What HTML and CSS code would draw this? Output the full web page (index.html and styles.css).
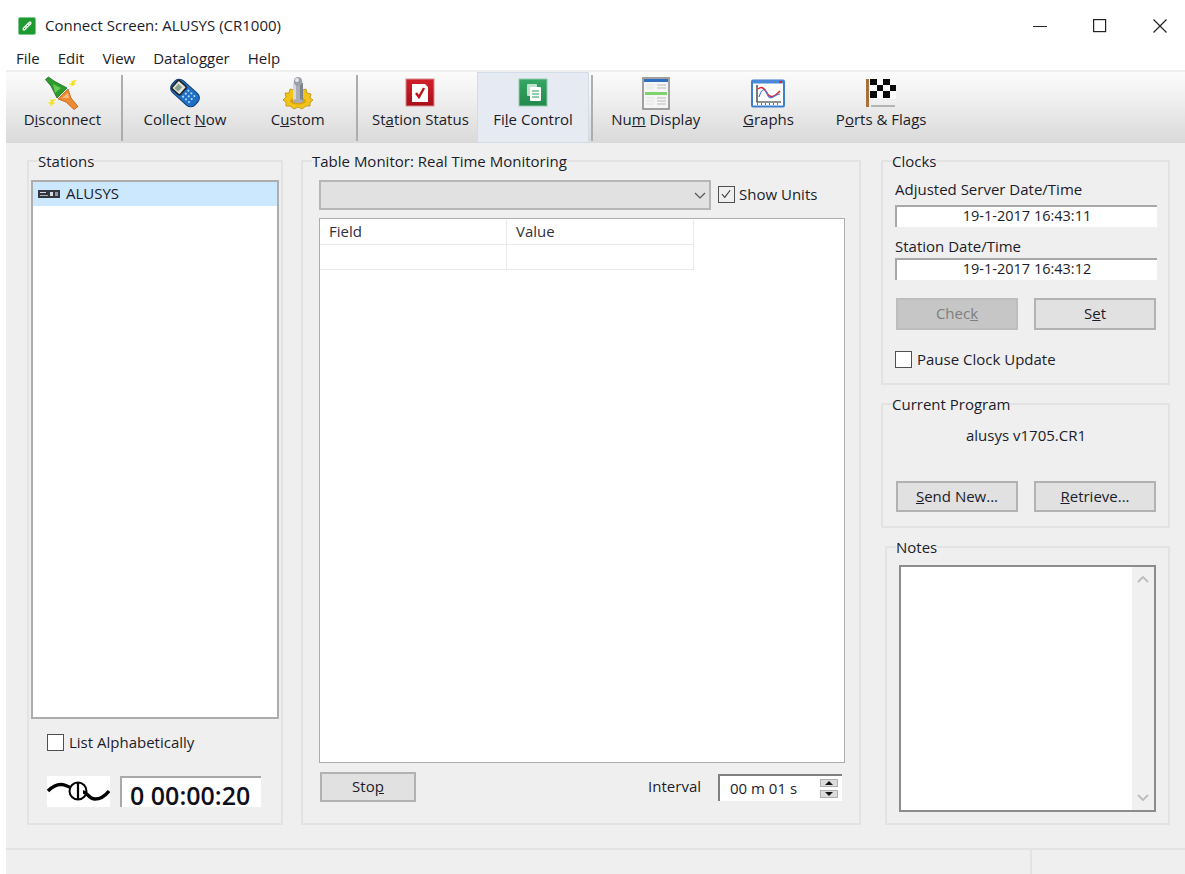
FILE: index.html
```html
<!DOCTYPE html>
<html lang="en">
<head>
<meta charset="utf-8">
<title>Connect Screen: ALUSYS (CR1000)</title>
<link rel="stylesheet" href="styles.css">
</head>
<body>
<div class="window">
  <header class="titlebar">
    <svg class="app-icon" viewBox="0 0 18 18">
      <rect x="0.5" y="0.5" width="17" height="17" rx="1.5" fill="#1f9a32" stroke="#7cc98a"/>
      <path d="M6 12 L12 6" stroke="#e8f5e8" stroke-width="3.2" stroke-linecap="round"/>
      <path d="M6 12 L12 6" stroke="#1f9a32" stroke-width="1" stroke-dasharray="2 2"/>
    </svg>
    <span class="title-text">Connect Screen: ALUSYS (CR1000)</span>
    <div class="win-controls">
      <svg class="win-btn" viewBox="0 0 14 14"><path d="M0 7.5H14" stroke="#222" fill="none"/></svg>
      <svg class="win-btn" viewBox="0 0 14 14"><rect x="0.6" y="0.6" width="12" height="12" stroke="#222" stroke-width="1.2" fill="none"/></svg>
      <svg class="win-btn" viewBox="0 0 14 14"><path d="M0.5 0.5L13.5 13.5M13.5 0.5L0.5 13.5" stroke="#222" stroke-width="1.2" fill="none"/></svg>
    </div>
  </header>
  <nav class="menubar">
    <span>File</span><span>Edit</span><span>View</span><span>Datalogger</span><span>Help</span>
  </nav>
  <div class="client">
    <div class="toolbar">
      <div class="tool">
        <svg class="tool-icon" viewBox="0 0 34 34">
          <path d="M0.5 3.5 L3.5 1 L9 5 L22 12 L12 22 L6 10 Z" fill="#2c9a2c" stroke="#1c6d1c" stroke-width="0.8"/>
          <path d="M8 8 L16 12 L10 17 Z" fill="#66c954"/>
          <path d="M23 13 L13 23 L21 26 L29 33.5 L33 30.5 L26 22 Z" fill="#ee8a30" stroke="#b8601c" stroke-width="0.8"/>
          <path d="M17 22 L23 17 L24 22 Z" fill="#f9bd7a"/>
          <path d="M23 8 L27 7 L26 5 L32 4 L29 7 L31 8 L25 11 L27 9 Z" fill="#f2e21e"/>
          <path d="M2 27 L6 26 L5 24 L11 23 L8 26 L10 27 L4 31 L6 28 Z" fill="#f2e21e"/>
        </svg>
        <span>D<u>i</u>sconnect</span>
      </div>
      <div class="tool-sep"></div>
      <div class="tool">
        <svg class="tool-icon" viewBox="0 0 34 34">
          <g transform="rotate(-48 17 17)">
            <rect x="9" y="1.5" width="16" height="31" rx="6" fill="#1f6fc4" stroke="#123f78" stroke-width="1"/>
            <rect x="11.5" y="3.5" width="11" height="11" rx="1.5" fill="#dfe5df" stroke="#222" stroke-width="1.6"/>
            <rect x="13.5" y="6" width="6" height="5" fill="#8aa08a"/>
            <g fill="#a9d4f5">
              <circle cx="13" cy="18" r="1.1"/><circle cx="17" cy="18" r="1.1"/><circle cx="21" cy="18" r="1.1"/>
              <circle cx="13" cy="22" r="1.1"/><circle cx="17" cy="22" r="1.1"/><circle cx="21" cy="22" r="1.1"/>
              <circle cx="13" cy="26" r="1.1"/><circle cx="17" cy="26" r="1.1"/><circle cx="21" cy="26" r="1.1"/>
            </g>
          </g>
        </svg>
        <span>Collect <u>N</u>ow</span>
      </div>
      <div class="tool">
        <svg class="tool-icon" viewBox="0 0 34 34">
          <path d="M14 11 L20 11 L21 14 L25 13 L26 17 L30 18 L29 22 L32 24 L29 27 L29 30 L25 30 L21 33 L17 31 L13 33 L9 30 L5 30 L5 26 L2 24 L5 21 L4 17 L8 17 L9 13 L13 14 Z" fill="#f2c418" stroke="#b98d10" stroke-width="0.8"/>
          <ellipse cx="17" cy="25" rx="8" ry="3.5" fill="#d9a00e"/>
          <rect x="12" y="7" width="10" height="18" fill="#a9aeb6"/>
          <rect x="12" y="7" width="3" height="18" fill="#d4d7dc"/>
          <rect x="19" y="7" width="3" height="18" fill="#7e838b"/>
          <ellipse cx="17" cy="25" rx="5" ry="2" fill="#a9aeb6"/>
          <ellipse cx="17" cy="5.5" rx="4.2" ry="4.5" fill="#9aa0a8"/>
          <ellipse cx="16" cy="4" rx="2" ry="2" fill="#e4e6e9"/>
        </svg>
        <span>C<u>u</u>stom</span>
      </div>
      <div class="tool-sep"></div>
      <div class="tool">
        <svg class="tool-icon" viewBox="0 0 34 34">
          <defs>
            <linearGradient id="redFace" x1="0" y1="0" x2="0" y2="1"><stop offset="0" stop-color="#d0202a"/><stop offset="1" stop-color="#a80f18"/></linearGradient>
            <linearGradient id="greenFace" x1="0" y1="0" x2="0" y2="1"><stop offset="0" stop-color="#35a765"/><stop offset="1" stop-color="#23884c"/></linearGradient>
          </defs>
          <rect x="3" y="3" width="28" height="27" fill="url(#redFace)" stroke="#d88a8e"/>
          <path d="M9 8 H22 L25 11 V26 H9 Z" fill="#fff"/>
          <path d="M13 17 L16 21 L21 12" stroke="#c1121c" stroke-width="2.4" fill="none"/>
        </svg>
        <span>St<u>a</u>tion Status</span>
      </div>
      <div class="tool tool-active">
        <svg class="tool-icon" viewBox="0 0 34 34">
          <rect x="3" y="3" width="28" height="27" fill="url(#greenFace)" stroke="#8fcba8"/>
          <rect x="11" y="8" width="10" height="12" rx="1" fill="#bfe3cd"/>
          <rect x="14" y="11" width="11" height="14" rx="1" fill="#fff"/>
          <path d="M16 15H23M16 18H23M16 21H23" stroke="#2b9a58"/>
        </svg>
        <span>Fi<u>l</u>e Control</span>
      </div>
      <div class="tool-sep"></div>
      <div class="tool">
        <svg class="tool-icon" viewBox="0 0 34 34">
          <rect x="4" y="2" width="26" height="31" fill="#f4f5f4" stroke="#8c8c8c" stroke-width="1.6"/>
          <rect x="5" y="3" width="24" height="3" fill="#2f6fc0"/>
          <rect x="6" y="16" width="22" height="3" fill="#7ed36d"/>
          <path d="M18 9H27M18 12H27M18 22H27M18 25H27M18 28H27" stroke="#b8bcb8"/>
          <path d="M7 9H15M7 12H15M7 22H15M7 25H15M7 28H15" stroke="#dfe3df"/>
        </svg>
        <span>Nu<u>m</u> Display</span>
      </div>
      <div class="tool">
        <svg class="tool-icon" viewBox="0 0 34 34">
          <rect x="1" y="4.5" width="32" height="26" rx="1" fill="#fff" stroke="#3f7fd0" stroke-width="2"/>
          <rect x="2" y="4" width="30" height="3.5" fill="#4a88d8"/>
          <rect x="28" y="5" width="3" height="2" fill="#e2222a"/>
          <path d="M6 9 V26 H30" stroke="#222" stroke-width="1.2" fill="none"/>
          <path d="M6 28H30" stroke="#444" stroke-width="1.4" stroke-dasharray="1 3"/>
          <path d="M7 13 C11 10 13 12 16 17 C19 23 23 21 29 15" stroke="#e2222a" stroke-width="1.5" fill="none"/>
          <path d="M8 21 C11 12 14 11 17 20 C20 25 24 18 29 18" stroke="#4a78e0" stroke-width="1.2" fill="none"/>
        </svg>
        <span><u>G</u>raphs</span>
      </div>
      <div class="tool">
        <svg class="tool-icon" viewBox="0 0 34 34">
          <rect x="2" y="3" width="3" height="28" fill="#a8703c"/>
          <rect x="5" y="4" width="27" height="19" fill="#fff"/>
          <g fill="#0a0a0a">
            <rect x="6" y="3" width="7" height="6"/><rect x="19" y="3" width="7" height="6"/>
            <rect x="13" y="9" width="6" height="6"/><rect x="26" y="9" width="6" height="6"/>
            <rect x="6" y="15" width="7" height="7"/><rect x="19" y="15" width="7" height="7"/>
          </g>
          <rect x="7" y="29" width="24" height="2" fill="#b4b4b4"/>
        </svg>
        <span>P<u>o</u>rts &amp; Flags</span>
      </div>
    </div>

    <main class="panels">
      <fieldset class="group group-stations">
        <legend>Stations</legend>
        <div class="group-body">
          <div class="station-list">
            <div class="station-row">
              <svg class="station-icon" viewBox="0 0 22 8">
                <rect width="22" height="8" fill="#33363c"/>
                <rect x="2" y="2" width="6" height="1" fill="#d5dbe4"/>
                <rect x="2" y="5" width="8" height="1" fill="#a8b0bc"/>
                <rect x="12" y="2" width="3" height="4" fill="#d5dbe4"/>
                <rect x="17" y="2" width="3" height="4" fill="#8d96a3"/>
              </svg>
              <span class="raised">ALUSYS</span>
            </div>
          </div>
          <label class="check check-list"><span class="box"></span><span class="raised">List Alphabetically</span></label>
          <div class="link-status">
            <svg class="link-icon" viewBox="0 0 63 31">
              <rect width="63" height="31" fill="#fff"/>
              <path d="M1 15 C7 9 14 7 20 10 C23 11 25 13 27 14" stroke="#000" stroke-width="3.4" fill="none"/>
              <circle cx="31" cy="15" r="8.5" fill="#fff" stroke="#000" stroke-width="2"/>
              <path d="M31 6 V24" stroke="#000" stroke-width="2.2"/>
              <path d="M36 16 C40 16 42 23 48 23 C54 23 58 20 62 15" stroke="#000" stroke-width="3.4" fill="none"/>
            </svg>
            <div class="timer">0 00:00:20</div>
          </div>
        </div>
      </fieldset>

      <fieldset class="group group-monitor">
        <legend>Table Monitor: Real Time Monitoring</legend>
        <div class="group-body">
          <div class="monitor-top">
            <div class="combo">
              <svg class="combo-arrow" viewBox="0 0 12 7"><path d="M1 1L6 6L11 1" stroke="#555" stroke-width="1.2" fill="none"/></svg>
            </div>
            <label class="check check-units"><span class="box box-checked"><svg viewBox="0 0 17 17"><path d="M3.5 8.5L7 12.5L13.5 4" stroke="#333" stroke-width="1.3" fill="none"/></svg></span><span>Show Units</span></label>
          </div>
          <div class="data-grid">
            <div class="grid-table">
              <div class="cell">Field</div><div class="cell">Value</div>
              <div class="cell"></div><div class="cell"></div>
            </div>
          </div>
          <div class="monitor-bottom">
            <button class="btn btn-stop">Sto<u>p</u></button>
            <span class="interval-label">Interval</span>
            <div class="spin">
              <span>00 m 01 s</span>
              <div class="spin-btns">
                <div class="spin-btn"><svg viewBox="0 0 8 4"><path d="M4 0L8 4H0Z" fill="#111"/></svg></div>
                <div class="spin-btn"><svg viewBox="0 0 8 4"><path d="M0 0H8L4 4Z" fill="#111"/></svg></div>
              </div>
            </div>
          </div>
        </div>
      </fieldset>

      <div class="side">
        <fieldset class="group group-clocks">
          <legend>Clocks</legend>
          <div class="group-body">
            <div class="field-label">Adjusted Server Date/Time</div>
            <div class="readout">19-1-2017 16:43:11</div>
            <div class="field-label field-label-next">Station Date/Time</div>
            <div class="readout">19-1-2017 16:43:12</div>
            <div class="btn-row btn-row-clocks">
              <button class="btn btn-disabled">Chec<u>k</u></button>
              <button class="btn">S<u>e</u>t</button>
            </div>
            <label class="check check-pause"><span class="box"></span><span class="raised">Pause Clock Update</span></label>
          </div>
        </fieldset>
        <fieldset class="group group-program">
          <legend>Current Program</legend>
          <div class="group-body">
            <div class="program-name">alusys v1705.CR1</div>
            <div class="btn-row btn-row-program">
              <button class="btn"><u>S</u>end New...</button>
              <button class="btn"><u>R</u>etrieve...</button>
            </div>
          </div>
        </fieldset>
        <fieldset class="group group-notes">
          <legend>Notes</legend>
          <div class="group-body">
            <div class="notes-box">
              <div class="scrollbar">
                <svg viewBox="0 0 12 7"><path d="M1 6L6 1L11 6" stroke="#bdbdbd" stroke-width="1.8" fill="none"/></svg>
                <svg viewBox="0 0 12 7"><path d="M1 1L6 6L11 1" stroke="#bdbdbd" stroke-width="1.8" fill="none"/></svg>
              </div>
            </div>
          </div>
        </fieldset>
      </div>
    </main>

    <footer class="statusbar"><div class="status-main"></div><div class="status-side"></div></footer>
  </div>
</div>
</body>
</html>
```
FILE: styles.css
```css
* { box-sizing: border-box; }

html, body {
  margin: 0;
  height: 100%;
  background: #fff;
}

body {
  font-family: "Open Sans", "Noto Sans", sans-serif;
  font-size: 15px;
  line-height: 18px;
  color: #1c1c2a;
  overflow: hidden;
}

.window {
  width: 1185px;
  height: 874px;
  display: flex;
  flex-direction: column;
}

/* Title and menu */
.titlebar {
  height: 44px;
  flex: none;
  display: flex;
  align-items: center;
  padding: 8px 0 0 18px;
}

.app-icon { width: 18px; height: 18px; flex: none; }

.title-text { margin: -2px 0 0 9px; }

.win-controls {
  margin-left: auto;
  display: flex;
  gap: 46px;
  padding-right: 18px;
  margin-top: -1px;
}

.win-btn { width: 14px; height: 14px; display: block; }

.menubar {
  height: 26px;
  flex: none;
  display: flex;
  gap: 18px;
  padding: 5px 0 0 16px;
}

/* Client area */
.client {
  flex: 1;
  min-height: 0;
  margin-left: 6px;
  padding-top: 2px;
  background: #efefef;
  display: flex;
  flex-direction: column;
}

.toolbar {
  height: 71px;
  flex: none;
  display: flex;
  background: linear-gradient(#fbfbfb, #f1f1f1 35%, #d9d9d9);
}

.tool {
  width: 112.7px;
  flex: none;
  display: flex;
  flex-direction: column;
  align-items: center;
  padding-top: 4px;
}

.tool-icon { width: 34px; height: 34px; display: block; }

.tool-active {
  background: #e6ebf3;
  border: 1px solid #d2dbe8;
  padding-top: 3px;
}

.tool-sep {
  width: 2px;
  flex: none;
  margin: 3px 6px 2px 2px;
  background: #adadad;
}

/* Panels */
.panels {
  flex: 1;
  min-height: 0;
  display: flex;
  gap: 18px;
  padding: 8px 15px 23px 21px;
}

.group {
  margin: 0;
  padding: 0;
  min-width: 0;
  border: 2px solid #e3e3e3;
}

.group legend {
  margin-left: 9px;
  padding: 0;
  line-height: 20px;
}

.group-body {
  height: 100%;
  display: flex;
  flex-direction: column;
}

.group-stations { width: 256px; flex: none; }
.group-stations .group-body { padding: 9px 2px 16px; }

.group-monitor { width: 560px; flex: none; }
.group-monitor .group-body { padding: 9px 14px 21px 16px; }

.side {
  width: 289px;
  flex: none;
  margin-left: 2px;
  display: flex;
  flex-direction: column;
  gap: 9px;
}

/* Stations */
.station-list {
  flex: 1;
  min-height: 0;
  background: #fff;
  border: 2px solid #adadad;
}

.station-row {
  height: 24px;
  display: flex;
  align-items: center;
  background: #cce8ff;
  padding-left: 5px;
  gap: 6px;
}

.station-icon { width: 22px; height: 8px; flex: none; }

.raised { margin-top: -2px; }

.check {
  display: flex;
  align-items: center;
  gap: 5px;
  height: 17px;
}

.check-units { gap: 4px; margin-top: -2px; }

.box {
  width: 17px;
  height: 17px;
  flex: none;
  background: #fff;
  border: 1.5px solid #505050;
  display: block;
}

.box-checked { background: transparent; }
.box-checked svg { display: block; width: 14px; height: 14px; }

.check-list { margin: 15px 0 0 16px; }

.link-status {
  margin: 25px 0 0 16px;
  height: 31px;
  flex: none;
  display: flex;
  gap: 10px;
}

.link-icon { width: 63px; height: 31px; display: block; flex: none; }

.timer {
  width: 141px;
  height: 31px;
  background: #fff;
  border-top: 2px solid #a8a8a8;
  border-left: 2px solid #a8a8a8;
  padding: 5px 0 0 8px;
  font-size: 25px;
  font-weight: 600;
  line-height: 24px;
  color: #10101c;
  white-space: nowrap;
}

/* Table monitor */
.monitor-top {
  height: 30px;
  flex: none;
  display: flex;
  align-items: center;
  gap: 7px;
}

.combo {
  width: 392px;
  height: 30px;
  background: #e1e1e1;
  border: 2px solid #b6b6b6;
  display: flex;
  align-items: center;
  justify-content: flex-end;
  padding-right: 3px;
}

.combo-arrow { width: 12px; height: 7px; display: block; }

.data-grid {
  flex: 1;
  min-height: 0;
  margin-top: 8px;
  background: #fff;
  border: 1.5px solid #adadad;
  padding-top: 1px;
}

.grid-table {
  display: grid;
  grid-template-columns: 187px 187px;
  grid-auto-rows: 25px;
}

.cell {
  padding: 2px 0 0 9px;
  border-right: 1.5px solid #eaeaea;
  border-bottom: 1.5px solid #eaeaea;
  color: #30303a;
}

.monitor-bottom {
  height: 30px;
  flex: none;
  margin-top: 9px;
  display: flex;
  align-items: center;
}

.btn {
  font: inherit;
  color: inherit;
  padding: 0 0 2px;
  background: #e1e1e1;
  border: 2px solid #b2b2b2;
  border-radius: 0;
}

.btn-stop { width: 96px; height: 30px; margin-left: 1px; }

.interval-label { margin-left: auto; margin-top: -3px; }

.spin {
  width: 124px;
  height: 27px;
  margin: 0 3px 0 17px;
  background: #fff;
  border-top: 2px solid #808080;
  border-left: 2px solid #808080;
  display: flex;
  align-items: center;
  justify-content: space-between;
  padding: 0 4px 0 10px;
}

.spin-btns {
  display: flex;
  flex-direction: column;
  gap: 3px;
}

.spin-btn {
  width: 18px;
  height: 8px;
  background: #dcdcdc;
  border: 1px solid #b0b0b0;
  display: flex;
  align-items: center;
  justify-content: center;
}

.spin-btn svg { width: 8px; height: 4px; display: block; }

/* Right column */
.group-clocks { height: 234px; flex: none; }
.group-clocks .group-body { padding: 9px 11px 0 12px; }

.field-label { height: 20px; flex: none; }
.field-label-next { margin-top: 10px; }

.readout {
  height: 22px;
  width: 262px;
  flex: none;
  margin-top: 5px;
  background: #fff;
  border-top: 2px solid #a8a8a8;
  border-left: 2px solid #a8a8a8;
  text-align: center;
  font-size: 14.5px;
  line-height: 17px;
}

.field-label-next + .readout { margin-top: 1px; }

.btn-row {
  display: flex;
  gap: 16px;
  margin-left: 1px;
  flex: none;
}

.btn-row .btn { width: 122px; }

.btn-row-clocks { margin-top: 18px; }
.btn-row-clocks .btn { height: 32px; }

.btn-disabled {
  background: #c6c6c6;
  border-color: #bdbdbd;
  color: #7e7e7e;
}

.check-pause { margin-top: 21px; }

.group-program { height: 134px; flex: none; }
.group-program .group-body { padding: 12px 11px 0 12px; }

.program-name { text-align: center; height: 20px; flex: none; }

.btn-row-program { margin-top: 35px; }
.btn-row-program .btn { height: 31px; }

.group-notes { flex: 1; min-height: 0; margin-left: 4px; }
.group-notes .group-body { padding: 8px 12px 11px; }

.notes-box {
  flex: 1;
  min-height: 0;
  background: #fff;
  border: 2px solid #8c8c8c;
  display: flex;
  justify-content: flex-end;
}

.scrollbar {
  width: 22px;
  background: #f0f0f0;
  display: flex;
  flex-direction: column;
  justify-content: space-between;
  align-items: center;
  padding: 9px 0;
}

.scrollbar svg { width: 12px; height: 7px; display: block; }

/* Status bar */
.statusbar {
  height: 26px;
  flex: none;
  border-top: 2px solid #e3e3e3;
  display: flex;
}

.status-main { flex: 1; }

.status-side {
  width: 155px;
  border-left: 2px solid #e3e3e3;
}
```
